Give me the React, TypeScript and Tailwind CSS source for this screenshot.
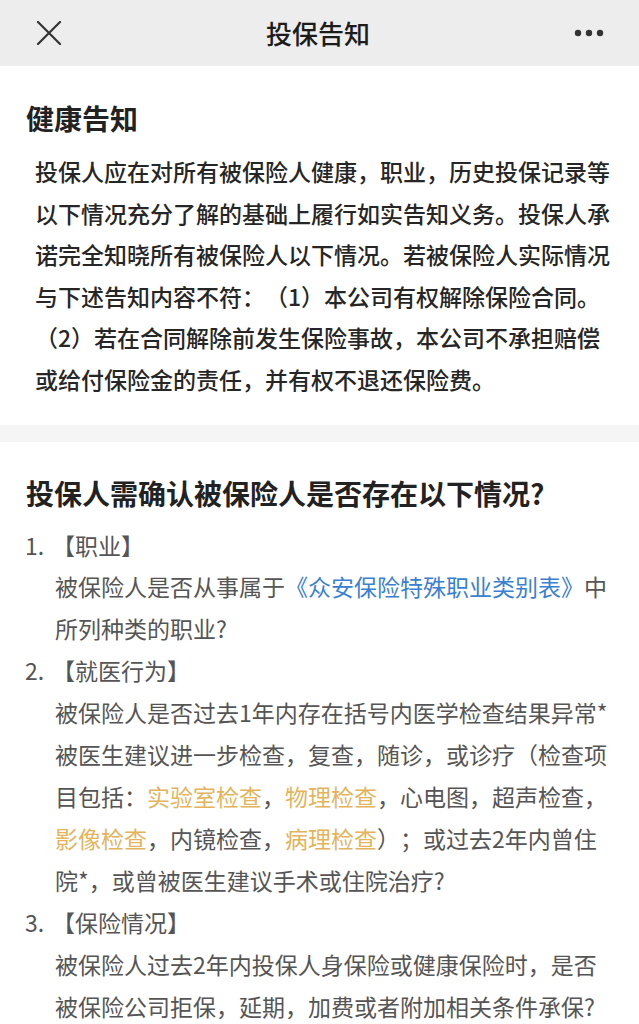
import { FC, ReactNode } from 'react';

const font = { fontFamily: '"Noto Sans CJK SC", "Noto Sans", sans-serif' };

const Blue: FC<{ children: ReactNode }> = ({ children }) => <span className="text-[#3a80d2]">{children}</span>;
const Gold: FC<{ children: ReactNode }> = ({ children }) => <span className="text-[#e3b45c]">{children}</span>;

interface Item {
    no: string;
    title: string;
    lines: ReactNode[];
}

const items: Item[] = [
    {
        no: '1.',
        title: '【职业】',
        lines: [
            <>被保险人是否从事属于<Blue>《众安保险特殊职业类别表》</Blue>中</>,
            '所列种类的职业?',
        ],
    },
    {
        no: '2.',
        title: '【就医行为】',
        lines: [
            '被保险人是否过去1年内存在括号内医学检查结果异常*',
            '被医生建议进一步检查，复查，随诊，或诊疗（检查项',
            <>目包括：<Gold>实验室检查</Gold>，<Gold>物理检查</Gold>，心电图，超声检查，</>,
            <><Gold>影像检查</Gold>，内镜检查，<Gold>病理检查</Gold>）；或过去2年内曾住</>,
            '院*，或曾被医生建议手术或住院治疗?',
        ],
    },
    {
        no: '3.',
        title: '【保险情况】',
        lines: [
            '被保险人过去2年内投保人身保险或健康保险时，是否',
            '被保险公司拒保，延期，加费或者附加相关条件承保?',
        ],
    },
];

const intro = [
    '投保人应在对所有被保险人健康，职业，历史投保记录等',
    '以下情况充分了解的基础上履行如实告知义务。投保人承',
    '诺完全知晓所有被保险人以下情况。若被保险人实际情况',
    '与下述告知内容不符：（1）本公司有权解除保险合同。',
    '（2）若在合同解除前发生保险事故，本公司不承担赔偿',
    '或给付保险金的责任，并有权不退还保险费。',
];

export default function App() {
    return (
        <div className="w-[639px] h-[1024px] overflow-hidden bg-white [text-spacing-trim:space-all]" style={font}>
            {/* Top bar */}
            <div className="h-[66px] bg-[#ededed] flex items-center justify-between px-[37px]">
                <svg width="26" height="24" viewBox="0 0 26 24" className="-ml-[1px]">
                    <path d="M2 1 L24 23 M24 1 L2 23" stroke="#333" strokeWidth="2.2" strokeLinecap="round" fill="none" />
                </svg>
                <span className="text-[26px] leading-none font-medium text-[#1c1c1c]">投保告知</span>
                <svg width="30" height="8" viewBox="0 0 30 8" className="mr-[-2px]">
                    <circle cx="4" cy="4" r="3.2" fill="#333" />
                    <circle cx="15" cy="4" r="3.2" fill="#333" />
                    <circle cx="26" cy="4" r="3.2" fill="#333" />
                </svg>
            </div>

            {/* 健康告知 */}
            <div className="pt-[32px] pb-[24px]">
                <h2 className="px-[26px] text-[28px] leading-[40px] font-semibold text-[#222]">健康告知</h2>
                <div className="mt-[13px] px-[35px] text-[23px] leading-[41.6px] font-medium text-[#262626]">
                    {intro.map((line, i) => (
                        <div key={i} className="whitespace-nowrap">{line}</div>
                    ))}
                </div>
            </div>

            <div className="h-[17px] bg-[#f5f5f5]" />

            {/* 情况确认 */}
            <div className="pt-[31px]">
                <h2 className="px-[26px] text-[28px] leading-[40px] font-semibold text-[#222]">投保人需确认被保险人是否存在以下情况?</h2>
                <div className="mt-[12px] text-[23px] leading-[41.9px] text-[#555]">
                    {items.map((item) => (
                        <div key={item.no}>
                            <div className="pl-[25px] whitespace-nowrap flex">
                                <span className="w-[27px]">{item.no}</span>
                                <span>{item.title}</span>
                            </div>
                            <div className="pl-[55px]">
                                {item.lines.map((line, i) => (
                                    <div key={i} className="whitespace-nowrap">{line}</div>
                                ))}
                            </div>
                        </div>
                    ))}
                </div>
            </div>
        </div>
    );
}
